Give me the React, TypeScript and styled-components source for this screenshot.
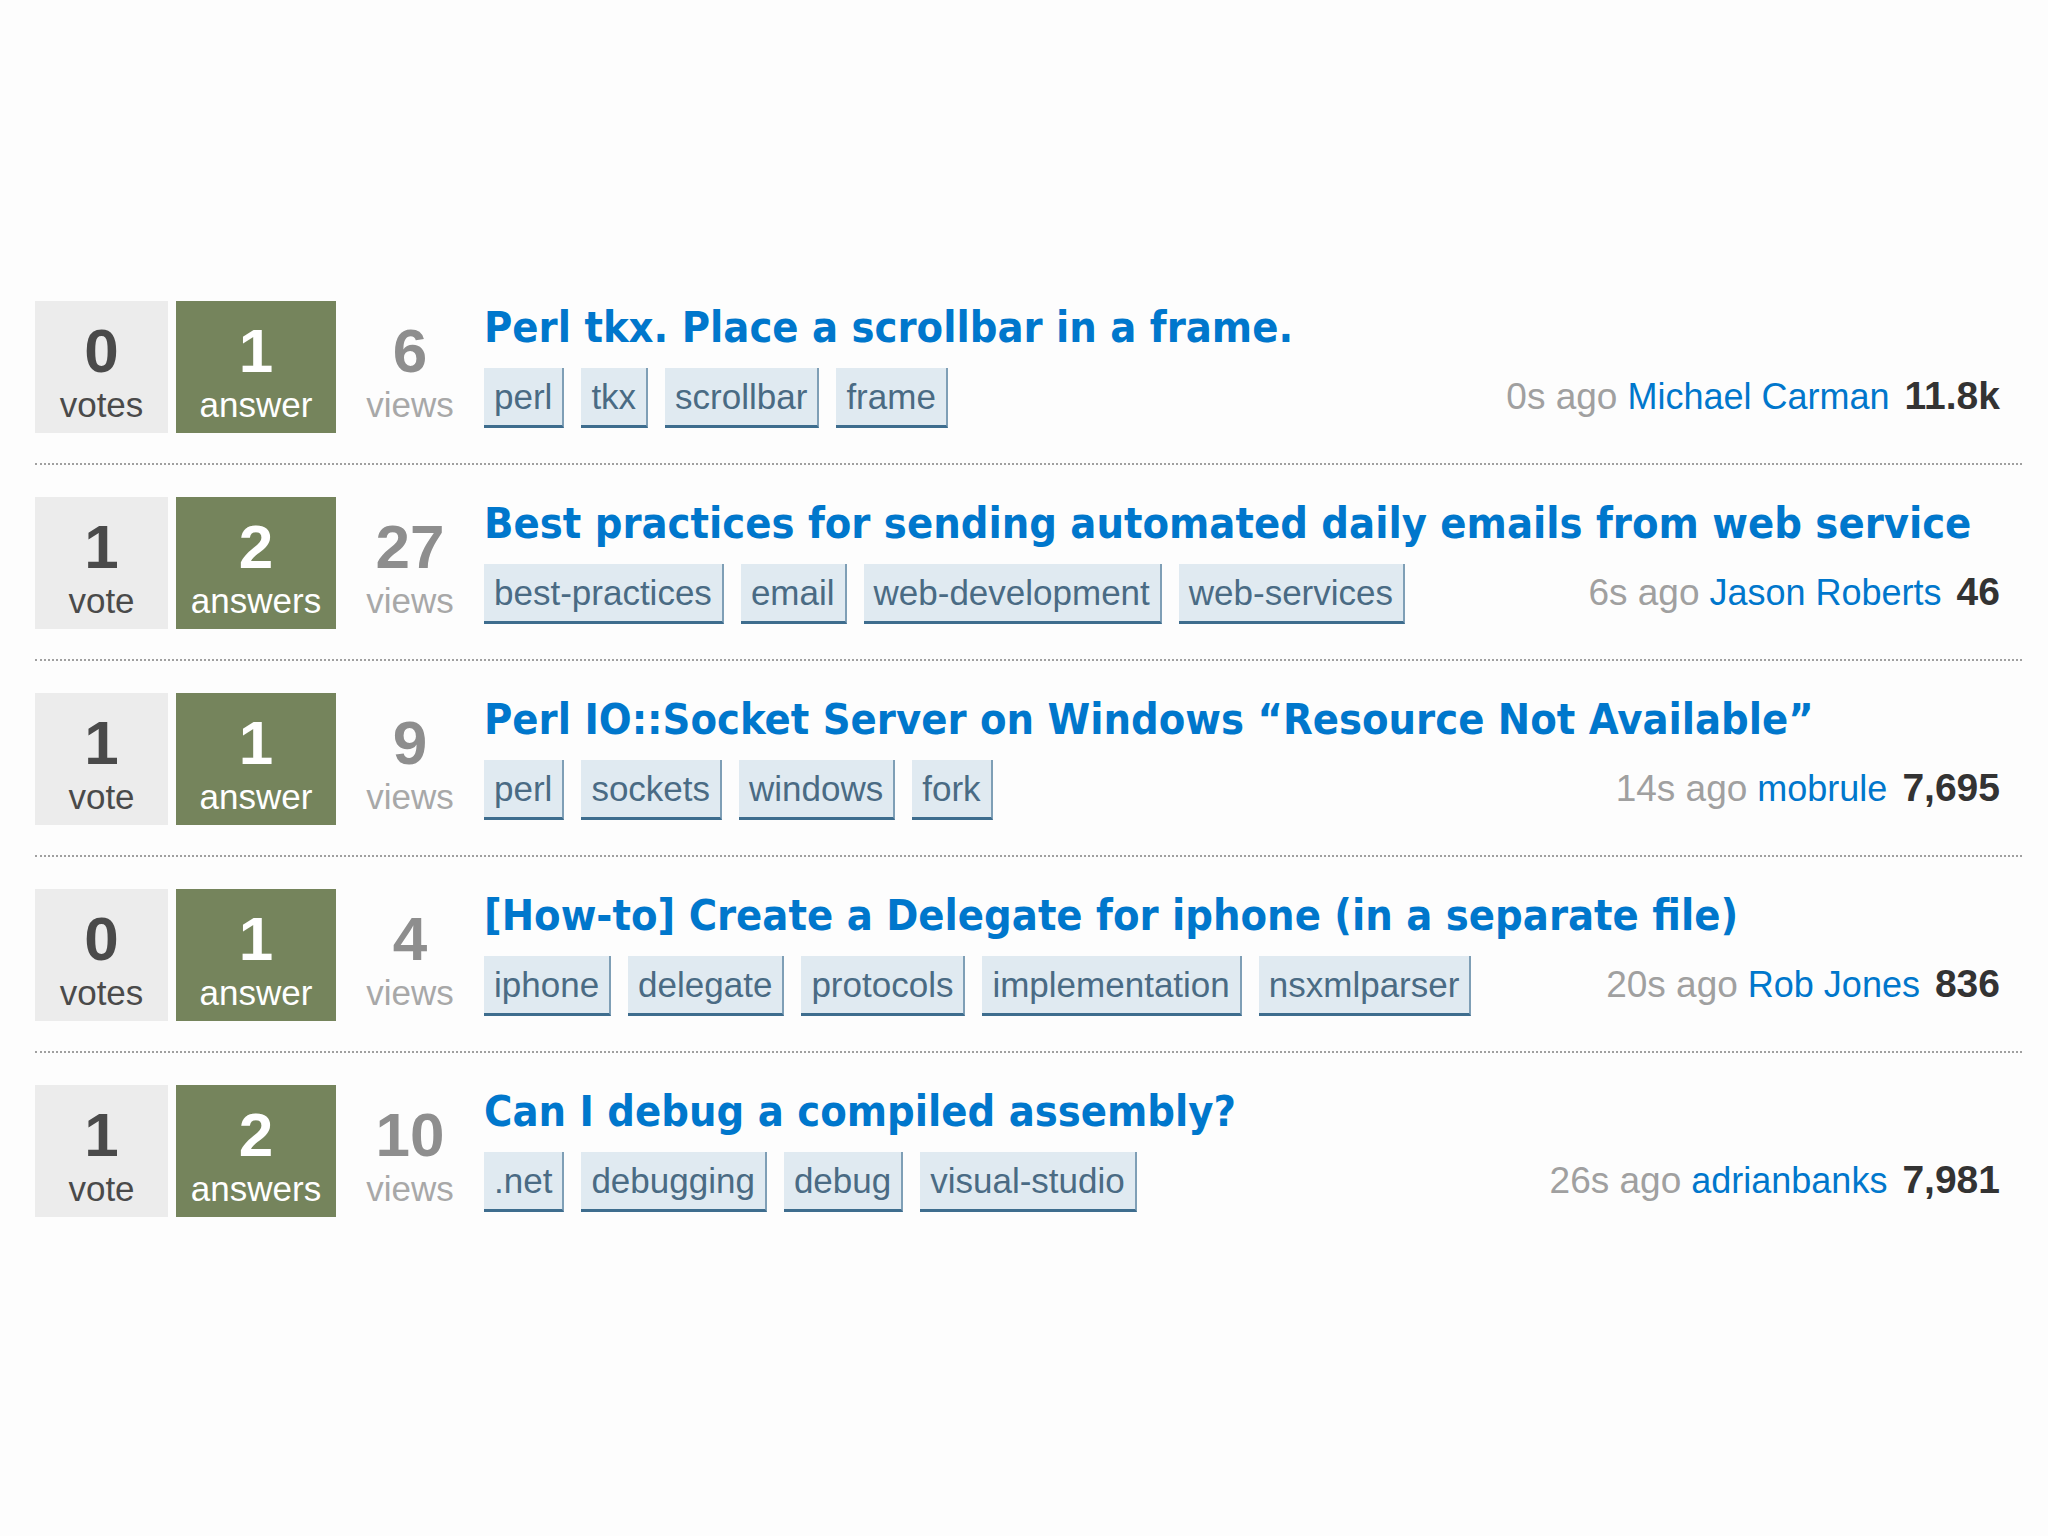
import styled, { createGlobalStyle } from 'styled-components'

const GlobalStyle = createGlobalStyle`
  html, body {
    margin: 0;
    padding: 0;
    background: #fdfdfd;
  }
  body {
    font-family: 'Liberation Sans', Arial, sans-serif;
  }
`

interface IQuestion {
  votes: number
  answers: number
  views: number
  title: string
  tags: string[]
  ago: string
  user: string
  rep: string
}

const questions: IQuestion[] = [
  {
    votes: 0,
    answers: 1,
    views: 6,
    title: 'Perl tkx. Place a scrollbar in a frame.',
    tags: ['perl', 'tkx', 'scrollbar', 'frame'],
    ago: '0s ago',
    user: 'Michael Carman',
    rep: '11.8k'
  },
  {
    votes: 1,
    answers: 2,
    views: 27,
    title: 'Best practices for sending automated daily emails from web service',
    tags: ['best-practices', 'email', 'web-development', 'web-services'],
    ago: '6s ago',
    user: 'Jason Roberts',
    rep: '46'
  },
  {
    votes: 1,
    answers: 1,
    views: 9,
    title: 'Perl IO::Socket Server on Windows \u201cResource Not Available\u201d',
    tags: ['perl', 'sockets', 'windows', 'fork'],
    ago: '14s ago',
    user: 'mobrule',
    rep: '7,695'
  },
  {
    votes: 0,
    answers: 1,
    views: 4,
    title: '[How-to] Create a Delegate for iphone (in a separate file)',
    tags: ['iphone', 'delegate', 'protocols', 'implementation', 'nsxmlparser'],
    ago: '20s ago',
    user: 'Rob Jones',
    rep: '836'
  },
  {
    votes: 1,
    answers: 2,
    views: 10,
    title: 'Can I debug a compiled assembly?',
    tags: ['.net', 'debugging', 'debug', 'visual-studio'],
    ago: '26s ago',
    user: 'adrianbanks',
    rep: '7,981'
  }
]

const Page = styled.div`
  padding: 301px 26px 0 35px;
`

const QuestionList = styled.div`
  display: flex;
  flex-direction: column;
`

const QuestionRow = styled.div`
  display: flex;
  align-items: stretch;
  padding-bottom: 30px;
  margin-bottom: 32px;
  border-bottom: 2px dotted #a0a0a0;

  &:last-child {
    border-bottom: none;
  }
`

const StatBox = styled.div<{ $variant: 'votes' | 'answers' | 'views' }>`
  width: ${({ $variant }) => ($variant === 'votes' ? '133px' : $variant === 'answers' ? '160px' : '132px')};
  height: 132px;
  margin-right: 8px;
  flex-shrink: 0;
  display: flex;
  flex-direction: column;
  align-items: center;
  background: ${({ $variant }) => ($variant === 'votes' ? '#ececec' : $variant === 'answers' ? '#75845c' : 'transparent')};
  color: ${({ $variant }) => ($variant === 'votes' ? '#4a4a4a' : $variant === 'answers' ? '#ffffff' : '#999999')};
`

const StatNumber = styled.div<{ $muted?: boolean }>`
  font-weight: bold;
  font-size: 62px;
  line-height: 50px;
  margin-top: 25px;
  color: ${({ $muted }) => ($muted ? '#8e8e8e' : 'inherit')};
`

const StatLabel = styled.div<{ $muted?: boolean }>`
  font-size: 35px;
  line-height: 40px;
  margin-top: 9px;
  color: ${({ $muted }) => ($muted ? '#a8a8a8' : 'inherit')};
`

const Summary = styled.div`
  flex: 1;
  min-width: 0;
  margin-right: 22px;
  display: flex;
  flex-direction: column;
`

const Title = styled.a`
  font-family: 'DejaVu Sans Condensed', 'DejaVu Sans', sans-serif;
  font-weight: bold;
  font-size: 43px;
  line-height: 52px;
  color: #0077cc;
  text-decoration: none;
  white-space: nowrap;
`

const MetaRow = styled.div`
  display: flex;
  align-items: flex-end;
  justify-content: space-between;
  margin-top: 14px;
`

const TagList = styled.div`
  display: flex;
  gap: 17px;
`

const Tag = styled.span`
  display: inline-block;
  height: 57px;
  line-height: 57px;
  padding: 0 10px;
  background: #e0eaf1;
  color: #4a6b84;
  font-size: 35px;
  border-bottom: 3px solid #3e6d8e;
  border-right: 2px solid #7f9fb6;
`

const UserInfo = styled.div`
  font-size: 36px;
  line-height: 57px;
  padding-bottom: 3px;
  white-space: nowrap;
`

const Ago = styled.span`
  color: #a0a0a0;
  font-size: 37px;
`

const UserName = styled.a`
  color: #0077cc;
  text-decoration: none;
  margin-left: 10px;
`

const Reputation = styled.span`
  color: #333333;
  font-weight: bold;
  font-size: 39px;
  margin-left: 15px;
`

const plural = (n: number, word: string) => (n === 1 ? word : `${word}s`)

const App = () => {
  return (
    <Page>
      <GlobalStyle />
      <QuestionList>
        {questions.map((q) => (
          <QuestionRow key={q.title}>
            <StatBox $variant="votes">
              <StatNumber>{q.votes}</StatNumber>
              <StatLabel>{plural(q.votes, 'vote')}</StatLabel>
            </StatBox>
            <StatBox $variant="answers">
              <StatNumber>{q.answers}</StatNumber>
              <StatLabel>{plural(q.answers, 'answer')}</StatLabel>
            </StatBox>
            <StatBox $variant="views">
              <StatNumber $muted>{q.views}</StatNumber>
              <StatLabel $muted>views</StatLabel>
            </StatBox>
            <Summary>
              <Title href="#">{q.title}</Title>
              <MetaRow>
                <TagList>
                  {q.tags.map((t) => (
                    <Tag key={t}>{t}</Tag>
                  ))}
                </TagList>
                <UserInfo>
                  <Ago>{q.ago}</Ago>
                  <UserName href="#">{q.user}</UserName>
                  <Reputation>{q.rep}</Reputation>
                </UserInfo>
              </MetaRow>
            </Summary>
          </QuestionRow>
        ))}
      </QuestionList>
    </Page>
  )
}

export default App
